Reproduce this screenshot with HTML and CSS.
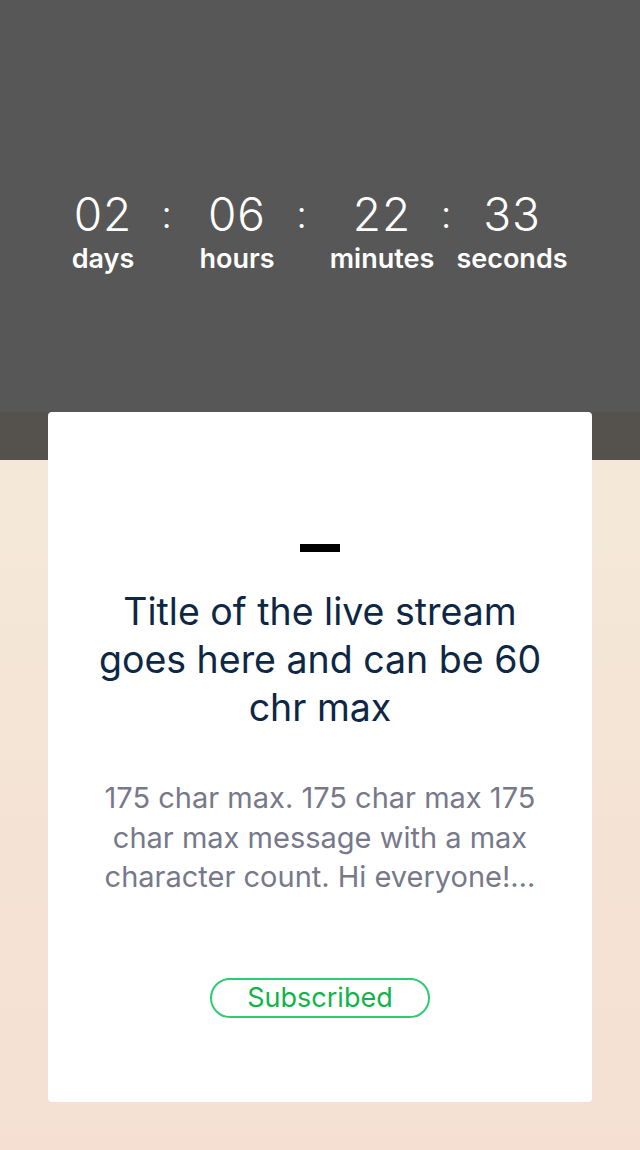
FILE: index.html
```html
<!DOCTYPE html>
<html lang="en">
<head>
<meta charset="utf-8">
<title>Live stream countdown</title>
<link rel="stylesheet" href="styles.css">
</head>
<body>
<header class="hero">
  <div class="countdown">
    <div class="unit unit-days"><span class="num">02</span><span class="label">days</span></div>
    <span class="colon">:</span>
    <div class="unit unit-hours"><span class="num">06</span><span class="label">hours</span></div>
    <span class="colon">:</span>
    <div class="unit unit-minutes"><span class="num">22</span><span class="label">minutes</span></div>
    <span class="colon">:</span>
    <div class="unit unit-seconds"><span class="num">33</span><span class="label">seconds</span></div>
  </div>
</header>
<main class="stage">
  <section class="card">
    <div class="dash"></div>
    <h1 class="title">Title of the live stream goes here and can be 60 chr max</h1>
    <p class="message">175 char max. 175 char max 175 char max message with a max character count. Hi everyone!…</p>
    <button class="subscribed" type="button">Subscribed</button>
  </section>
</main>
</body>
</html>
```
FILE: styles.css
```css
* { box-sizing: border-box; }
html, body { margin: 0; padding: 0; }
body {
  width: 640px;
  height: 1150px;
  overflow: hidden;
  font-family: Inter, "Noto Sans", sans-serif;
  background: #f5dfd3;
}
.hero {
  height: 412px;
  background: #575757;
  display: flex;
  align-items: center;
  justify-content: center;
  padding-top: 51px;
}
.countdown {
  display: flex;
  align-items: flex-start;
  color: #fff;
}
.unit {
  display: flex;
  flex-direction: column;
  align-items: center;
}
.num {
  font-weight: 300;
  font-size: 46px;
  line-height: 50px;
  letter-spacing: 1px;
}
.label {
  font-weight: 600;
  font-size: 27px;
  line-height: 32px;
  margin-top: 4px;
}
.colon {
  font-weight: 300;
  font-size: 38px;
  line-height: 50px;
  text-align: center;
}
.unit-days { width: 62px; }
.unit-hours { width: 76px; }
.unit-minutes { width: 108px; }
.unit-seconds { width: 112px; }
.colon:nth-of-type(1) { width: 65px; }
.colon:nth-of-type(2) { width: 53px; }
.colon:nth-of-type(3) { width: 20px; }
.stage {
  height: 738px;
  padding: 0 48px 48px;
  background:
    linear-gradient(#55524d, #55524d) top / 100% 48px no-repeat,
    linear-gradient(#f4e9d8, #f5dfd3) 0 48px / 100% 690px no-repeat;
}
.card {
  height: 690px;
  background: #fff;
  border-radius: 4px;
  display: flex;
  flex-direction: column;
  align-items: center;
  padding: 132px 40px 0;
  text-align: center;
}
.dash {
  width: 40px;
  height: 8px;
  background: #000;
}
.title {
  margin: 36px 0 0;
  font-weight: 400;
  font-size: 37.5px;
  line-height: 48px;
  color: #0d2744;
  width: 464px;
}
.message {
  margin: 46px 0 0;
  font-size: 29px;
  line-height: 39.5px;
  color: #77798a;
  width: 450px;
}
.subscribed {
  margin-top: 81px;
  width: 220px;
  height: 40px;
  border: 2px solid #2ecc71;
  border-radius: 20px;
  background: #fff;
  color: #12b34a;
  font-family: Inter, "Noto Sans", sans-serif;
  font-size: 27px;
  line-height: 34px;
  padding: 0;
}
```
